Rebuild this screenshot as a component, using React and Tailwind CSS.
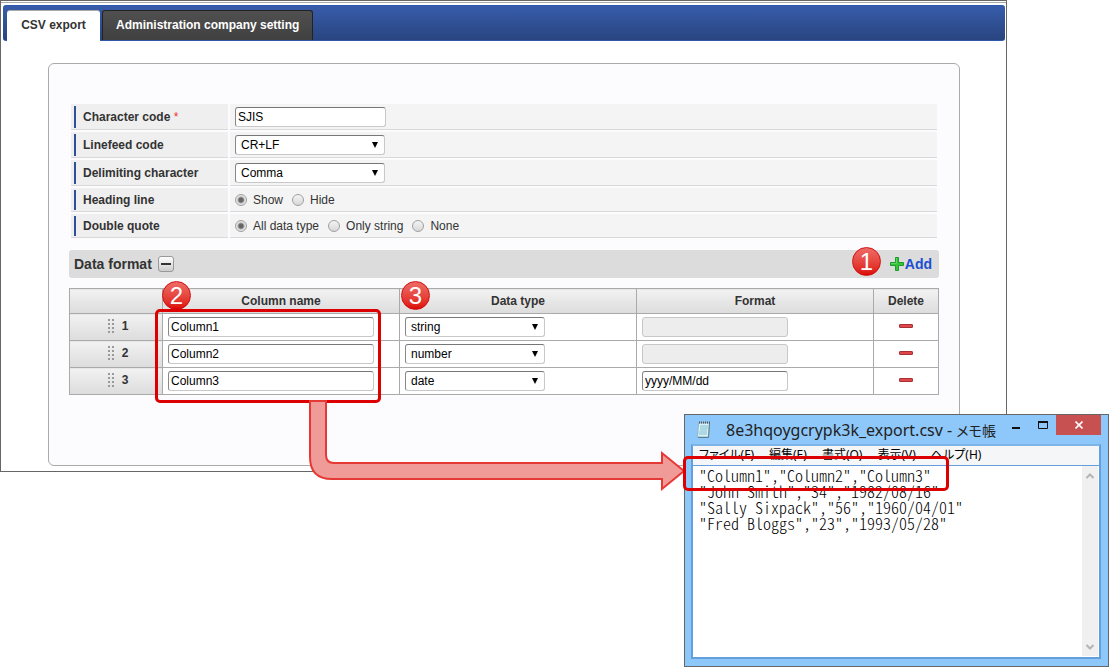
import { useState } from "react";

const columns = [
  { id: 1, name: "Column1", type: "string", format: "" },
  { id: 2, name: "Column2", type: "number", format: "" },
  { id: 3, name: "Column3", type: "date", format: "yyyy/MM/dd" },
];

const csvLines = [
  '"Column1","Column2","Column3"',
  '"John Smith","34","1982/08/16"',
  '"Sally Sixpack","56","1960/04/01"',
  '"Fred Bloggs","23","1993/05/28"',
];

const menus = ["ファイル(F)", "編集(E)", "書式(O)", "表示(V)", "ヘルプ(H)"];

const fieldBox =
  "block h-5 rounded-[3px] border border-[#c8c8c8] border-t-[#777] border-l-[#888] bg-white text-xs text-black";

function TextInput({ className, ...props }) {
  return (
    <input
      type="text"
      className={`${fieldBox} px-[2px] disabled:border-[#c8c8c8] disabled:bg-[#ededed] ${className}`}
      {...props}
    />
  );
}

function Select({ className, options, ...props }) {
  return (
    <div className={`relative ${className}`}>
      <select className={`${fieldBox} w-full appearance-none pl-[5px]`} {...props}>
        {options.map((o) => (
          <option key={o}>{o}</option>
        ))}
      </select>
      <svg
        className="pointer-events-none absolute top-[7px] right-[7px]"
        width="6"
        height="6"
        viewBox="0 0 6 6"
      >
        <path d="M0 0H6L3 6Z" fill="#000" />
      </svg>
    </div>
  );
}

function Radios({ name, options }) {
  const [value, setValue] = useState(options[0]);
  return (
    <div className="flex gap-[9px]">
      {options.map((o) => (
        <label key={o} className="flex items-center gap-[6px]">
          <input
            type="radio"
            name={name}
            checked={value === o}
            onChange={() => setValue(o)}
            className="h-3 w-3 appearance-none rounded-full border border-[#a0a0a0] bg-linear-to-b from-[#f4f4f4] to-[#d8d8d8] checked:bg-[radial-gradient(circle,#666_0,#666_2px,#e4e4e4_4px)]"
          />
          {o}
        </label>
      ))}
    </div>
  );
}

function FormRow({ label, htmlFor, required, children }) {
  return (
    <div className="flex gap-[2px]">
      <div className="flex w-[157px] items-stretch border-b border-[#d9d9d9] bg-[#efefef] pt-[2px] pb-px pl-[3px]">
        <div className="flex items-center border-l-2 border-[#2f4f96] pb-px pl-[7px] font-bold">
          <label htmlFor={htmlFor}>
            {label}
            {required && <span className="font-normal text-[#f03030]"> *</span>}
          </label>
        </div>
      </div>
      <div className="flex flex-1 items-center border-b border-[#d9d9d9] bg-[#f4f4f4] pt-[3px] pb-[2px] pl-[5px]">
        {children}
      </div>
    </div>
  );
}

function Badge({ n, className }) {
  return (
    <span
      className={`absolute flex h-[29px] w-[29px] items-center justify-center rounded-full border border-[#d01010] bg-linear-to-b from-[#ee6a66] to-[#dd0000] text-2xl leading-none font-normal text-white ${className}`}
    >
      {n}
    </span>
  );
}

function Notepad() {
  return (
    <div className="absolute top-[414px] left-[684px] flex h-[253px] w-[425px] flex-col border border-[#666] bg-[#8ec8fa] pr-[7px] pb-[7px] pl-[6px]">
      <div className="flex h-[29px]">
        <svg className="mt-[6px] ml-[5px]" width="16" height="18" viewBox="0 0 16 18">
          <path d="M2.5 2H13.5L12.5 16H1.5Z" fill="#d9f1f7" stroke="#8fb6c2" />
          <path d="M4 5H12M4 7H12M4 9H11M3 11H11M3 13H11" stroke="#7fc0d0" />
          <path d="M13.5 2L12.5 16.5H2" fill="none" stroke="#5d7f8c" />
          <path d="M3 1.5H14" stroke="#555" strokeDasharray="1 1" strokeWidth="2" />
        </svg>
        <h2 className="mt-[3px] ml-[14px] flex-1 font-['Noto_Sans','Noto_Sans_CJK_JP',sans-serif] text-base leading-6 whitespace-nowrap text-[#222]">
          8e3hqoygcrypk3k_export.csv -{" "}
          <span className="text-sm leading-6 [font-feature-settings:'palt']">メモ帳</span>
        </h2>
        <button aria-label="Minimize" className="flex h-5 w-7 items-center justify-center">
          <svg width="8" height="8" viewBox="0 0 8 8">
            <path d="M0 7H8" stroke="#111" strokeWidth="2" />
          </svg>
        </button>
        <button aria-label="Maximize" className="flex h-5 w-[26px] items-center justify-center">
          <svg width="10" height="8" viewBox="0 0 10 8">
            <path d="M.5 0V7.5H9.5V0" fill="none" stroke="#111" />
            <path d="M0 1H10" stroke="#111" strokeWidth="2" />
          </svg>
        </button>
        <button
          aria-label="Close"
          className="flex h-5 w-[45px] items-center justify-center bg-[#c75050]"
        >
          <svg width="8" height="8" viewBox="0 0 8 8">
            <path d="M.5 .5L7.5 7.5M7.5 .5L.5 7.5" stroke="#fff" strokeWidth="1.6" />
          </svg>
        </button>
      </div>

      <div className="flex flex-1 flex-col border-2 border-[#639fdc] border-t-[#7fb4e6] bg-white">
        <div className="flex h-[19px] items-center gap-[15px] bg-[#f5f6f7] pb-px pl-[6px] font-['Noto_Sans','Noto_Sans_CJK_JP',sans-serif] text-xs leading-4 whitespace-nowrap text-black [font-feature-settings:'palt']">
          {menus.map((m) => (
            <span key={m}>{m}</span>
          ))}
        </div>
        <div className="flex flex-1 border-t border-[#639fdc]">
          <pre className="flex-1 pt-px pl-[6px] font-['Noto_Sans_CJK_JP',monospace] text-base leading-4 font-light text-black [font-feature-settings:'hwid']">
            {csvLines.join("\n")}
          </pre>
          <div className="mr-px mb-px flex w-4 flex-col items-center justify-between bg-[#f0f0f0] pt-[7px] pb-[6px]">
            <svg width="8" height="6" viewBox="0 0 8 6">
              <path d="M.5 5L4 1.5L7.5 5" fill="none" stroke="#b4b4b4" strokeWidth="2" />
            </svg>
            <svg width="8" height="6" viewBox="0 0 8 6">
              <path d="M.5 1L4 4.5L7.5 1" fill="none" stroke="#b4b4b4" strokeWidth="2" />
            </svg>
          </div>
        </div>
      </div>
    </div>
  );
}

export default function App() {
  const headCell = "border border-[#aaa] bg-linear-to-b from-[#f2f2f2] to-[#dcdcdc]";

  return (
    <div className="relative min-h-screen overflow-hidden bg-white font-['Liberation_Sans',Arial,sans-serif] text-xs text-[#333]">
      <div className="mr-[102px] border border-[#666] pt-px pb-[5px]">
        {/* TABS */}
        <div className="border-t border-[#aaa] pt-[2px] pr-px pl-[2px]">
          <nav className="flex h-9 items-end gap-[2px] rounded-[3px] border-t border-b border-[#3058a8] bg-linear-to-b from-[#385cab] to-[#294580] pl-1 font-bold">
            <a
              href="#export"
              className="-mb-px flex h-[31px] w-[93px] items-center justify-center rounded-t-[3px] border-t border-[#aaa] bg-white pb-[2px]"
            >
              CSV export
            </a>
            <a
              href="#setting"
              className="flex h-[30px] items-center rounded-t-[3px] border border-b-0 border-[#222] bg-linear-to-b from-[#505050] to-[#404040] px-[13px] pb-[2px] text-white"
            >
              Administration company setting
            </a>
          </nav>
        </div>

        <main className="mt-[22px] mr-[46px] ml-[47px] rounded-md border border-[#aaa] bg-[#fcfcfe] px-5 pt-10 pb-[70px]">
          {/* OPTIONS */}
          <form className="mx-[2px] flex flex-col gap-[2px]">
            <FormRow label="Character code" htmlFor="charcode" required>
              <TextInput id="charcode" defaultValue="SJIS" className="w-[151px]" />
            </FormRow>
            <FormRow label="Linefeed code" htmlFor="linefeed">
              <Select id="linefeed" className="w-[150px]" options={["CR+LF", "CR", "LF"]} />
            </FormRow>
            <FormRow label="Delimiting character" htmlFor="delimiter">
              <Select id="delimiter" className="w-[150px]" options={["Comma", "Tab"]} />
            </FormRow>
            <FormRow label="Heading line">
              <div className="flex h-[18px] items-center pb-px">
                <Radios name="heading" options={["Show", "Hide"]} />
              </div>
            </FormRow>
            <FormRow label="Double quote">
              <div className="flex h-[18px] items-center pb-px">
                <Radios name="quote" options={["All data type", "Only string", "None"]} />
              </div>
            </FormRow>
          </form>

          {/* DATA FORMAT */}
          <div className="relative mt-3 flex h-7 items-center rounded-[3px] bg-[#dcdcdc] pr-[7px] pl-[5px] text-sm font-bold">
            <h2>Data format</h2>
            <button
              aria-label="Collapse"
              className="ml-[6px] flex h-4 w-4 items-center justify-center rounded-[3px] border border-[#999] bg-linear-to-b from-white to-[#ccc]"
            >
              <span className="h-[2px] w-[10px] bg-[#333]" />
            </button>
            <button className="ml-auto flex items-center gap-px text-[#1a4fd0]">
              <svg width="14" height="14" viewBox="0 0 14 14">
                <path
                  d="M5.5 .5H8.5V5.5H13.5V8.5H8.5V13.5H5.5V8.5H.5V5.5H5.5Z"
                  fill="#35c435"
                  stroke="#1d9a2c"
                />
                <path d="M6.5 1V6.5H1" fill="none" stroke="#5fd45f" />
              </svg>
              Add
            </button>
            <Badge n="1" className="-top-[3px] right-[58px]" />
          </div>

          <div className="relative mt-[10px]">
            <table className="w-full table-fixed border-collapse bg-white">
              <thead>
                <tr className="h-[25px]">
                  <th className={`${headCell} w-[93px]`}></th>
                  <th className={headCell}>Column name</th>
                  <th className={headCell}>Data type</th>
                  <th className={headCell}>Format</th>
                  <th className={`${headCell} w-[65px]`}>Delete</th>
                </tr>
              </thead>
              <tbody>
                {columns.map((c) => (
                  <tr key={c.id} className="h-[27px]">
                    <th className={`${headCell} pb-[2px]`}>
                      <div className="flex items-center justify-center gap-2 pl-1">
                        <svg width="6" height="14" viewBox="0 0 6 14">
                          <path
                            d="M1 0V14M5 0V14"
                            stroke="#999"
                            strokeWidth="2"
                            strokeDasharray="2 2"
                          />
                        </svg>
                        {c.id}
                      </div>
                    </th>
                    <td className="border border-[#aaa] px-[5px]">
                      <TextInput
                        aria-label="Column name"
                        defaultValue={c.name}
                        className="w-[206px]"
                      />
                    </td>
                    <td className="border border-[#aaa] px-[5px]">
                      <Select
                        aria-label="Data type"
                        defaultValue={c.type}
                        className="w-[140px]"
                        options={["string", "number", "date"]}
                      />
                    </td>
                    <td className="border border-[#aaa] px-[5px]">
                      <TextInput
                        aria-label="Format"
                        defaultValue={c.format}
                        disabled={!c.format}
                        className="w-[146px]"
                      />
                    </td>
                    <td className="border border-[#aaa] pb-[2px]">
                      <button
                        aria-label="Delete"
                        className="mx-auto block h-1 w-[14px] rounded-[1px] border border-[#a83038] bg-[#e04848]"
                      />
                    </td>
                  </tr>
                ))}
              </tbody>
            </table>
            <Badge n="2" className="-top-[7px] left-[93px]" />
            <Badge n="3" className="-top-[7px] left-[332px]" />
            <div className="pointer-events-none absolute top-[21px] left-[86px] h-[94px] w-[226px] rounded-[5px] border-3 border-[#dd0000]" />
          </div>
        </main>
      </div>

      <Notepad />

      {/* CALLOUTS */}
      <svg
        className="pointer-events-none absolute top-[395px] left-[300px]"
        width="390"
        height="100"
        viewBox="300 395 390 100"
      >
        <path
          d="M310 401H326V455Q326 463 334 463H662V453L684 471L662 489V479H332Q310 479 310 457Z"
          fill="#f19b98"
          stroke="#e53935"
          strokeWidth="2"
        />
      </svg>
      <div className="pointer-events-none absolute top-[456px] left-[683px] h-[35px] w-[266px] rounded-[5px] border-3 border-[#dd0000]" />
    </div>
  );
}
